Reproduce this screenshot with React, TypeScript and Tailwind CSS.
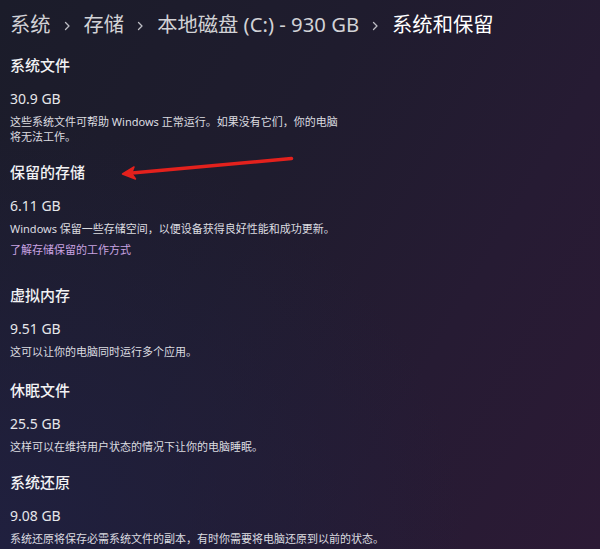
import React from 'react';

const font = 'font-["Segoe_UI","Noto_Sans","Noto_Sans_CJK_SC",sans-serif]';

type Section = {
  title: string;
  size: string;
  desc: React.ReactNode;
  link?: string;
  gap: string;
};

const sections: Section[] = [
  {
    title: '系统文件',
    size: '30.9 GB',
    desc: '这些系统文件可帮助 Windows 正常运行。如果没有它们，你的电脑将无法工作。',
    gap: 'mt-0 w-[330px]',
  },
  {
    title: '保留的存储',
    size: '6.11 GB',
    desc: 'Windows 保留一些存储空间，以便设备获得良好性能和成功更新。',
    link: '了解存储保留的工作方式',
    gap: 'mt-[18px]',
  },
  {
    title: '虚拟内存',
    size: '9.51 GB',
    desc: '这可以让你的电脑同时运行多个应用。',
    gap: 'mt-[28px]',
  },
  {
    title: '休眠文件',
    size: '25.5 GB',
    desc: '这样可以在维持用户状态的情况下让你的电脑睡眠。',
    gap: 'mt-[21px]',
  },
  {
    title: '系统还原',
    size: '9.08 GB',
    desc: '系统还原将保存必需系统文件的副本，有时你需要将电脑还原到以前的状态。',
    gap: 'mt-[18px]',
  },
];

function Chevron() {
  return (
    <svg width="7" height="10" viewBox="0 0 7 10" className="mx-[13px] mt-[3px] shrink-0">
      <path d="M1.5 1.5 L5 5 L1.5 8.5" fill="none" stroke="#bdbdc4" strokeWidth="1.3" strokeLinecap="round" strokeLinejoin="round" />
    </svg>
  );
}

export default function App() {
  const crumbs = ['系统', '存储', '本地磁盘 (C:) - 930 GB', '系统和保留'];

  return (
    <div
      className={`${font} relative w-[600px] h-[549px] overflow-hidden bg-[radial-gradient(ellipse_at_bottom_left,#20203f_0%,transparent_55%),linear-gradient(120deg,#1b1c2a_0%,#1f1c2e_40%,#261b33_70%,#2c1a35_100%)] px-[10px] pt-[10px]`}
    >
      {/* breadcrumb */}
      <div className="flex items-center h-[28px] text-[20.3px] leading-[28px] whitespace-nowrap">
        {crumbs.map((c, i) => (
          <React.Fragment key={c}>
            {i > 0 && <Chevron />}
            <span className={i === crumbs.length - 1 ? 'text-white' : 'text-[#d2d2d6]'}>{c}</span>
          </React.Fragment>
        ))}
      </div>

      <div className="mt-[17px] flex flex-col">
        {sections.map((s) => (
          <div key={s.title} className={s.gap}>
            <div className="h-[20px] text-[15px] leading-[20px] font-medium text-[#f2f2f4]">{s.title}</div>
            <div className="mt-[14px] h-[20px] text-[14px] leading-[20px] text-[#e6e6ea]">{s.size}</div>
            <p className="mt-[5px] text-[11px] leading-[15px] text-[#dcdce0]">{s.desc}</p>
            {s.link && (
              <div className="mt-[6px] text-[11px] leading-[15px] text-[#c9a3e2]">{s.link}</div>
            )}
          </div>
        ))}
      </div>

      {/* red annotation arrow */}
      <svg className="absolute left-0 top-0 pointer-events-none" width="600" height="549" viewBox="0 0 600 549">
        <path d="M291.5 158.5 L132 173" stroke="#e3211d" strokeWidth="3.5" strokeLinecap="round" fill="none" />
        <path d="M122.5 174 L134 167 L131.5 173.3 L135.5 179 Z" fill="#e3211d" stroke="#e3211d" strokeWidth="1.5" strokeLinejoin="round" />
      </svg>
    </div>
  );
}
